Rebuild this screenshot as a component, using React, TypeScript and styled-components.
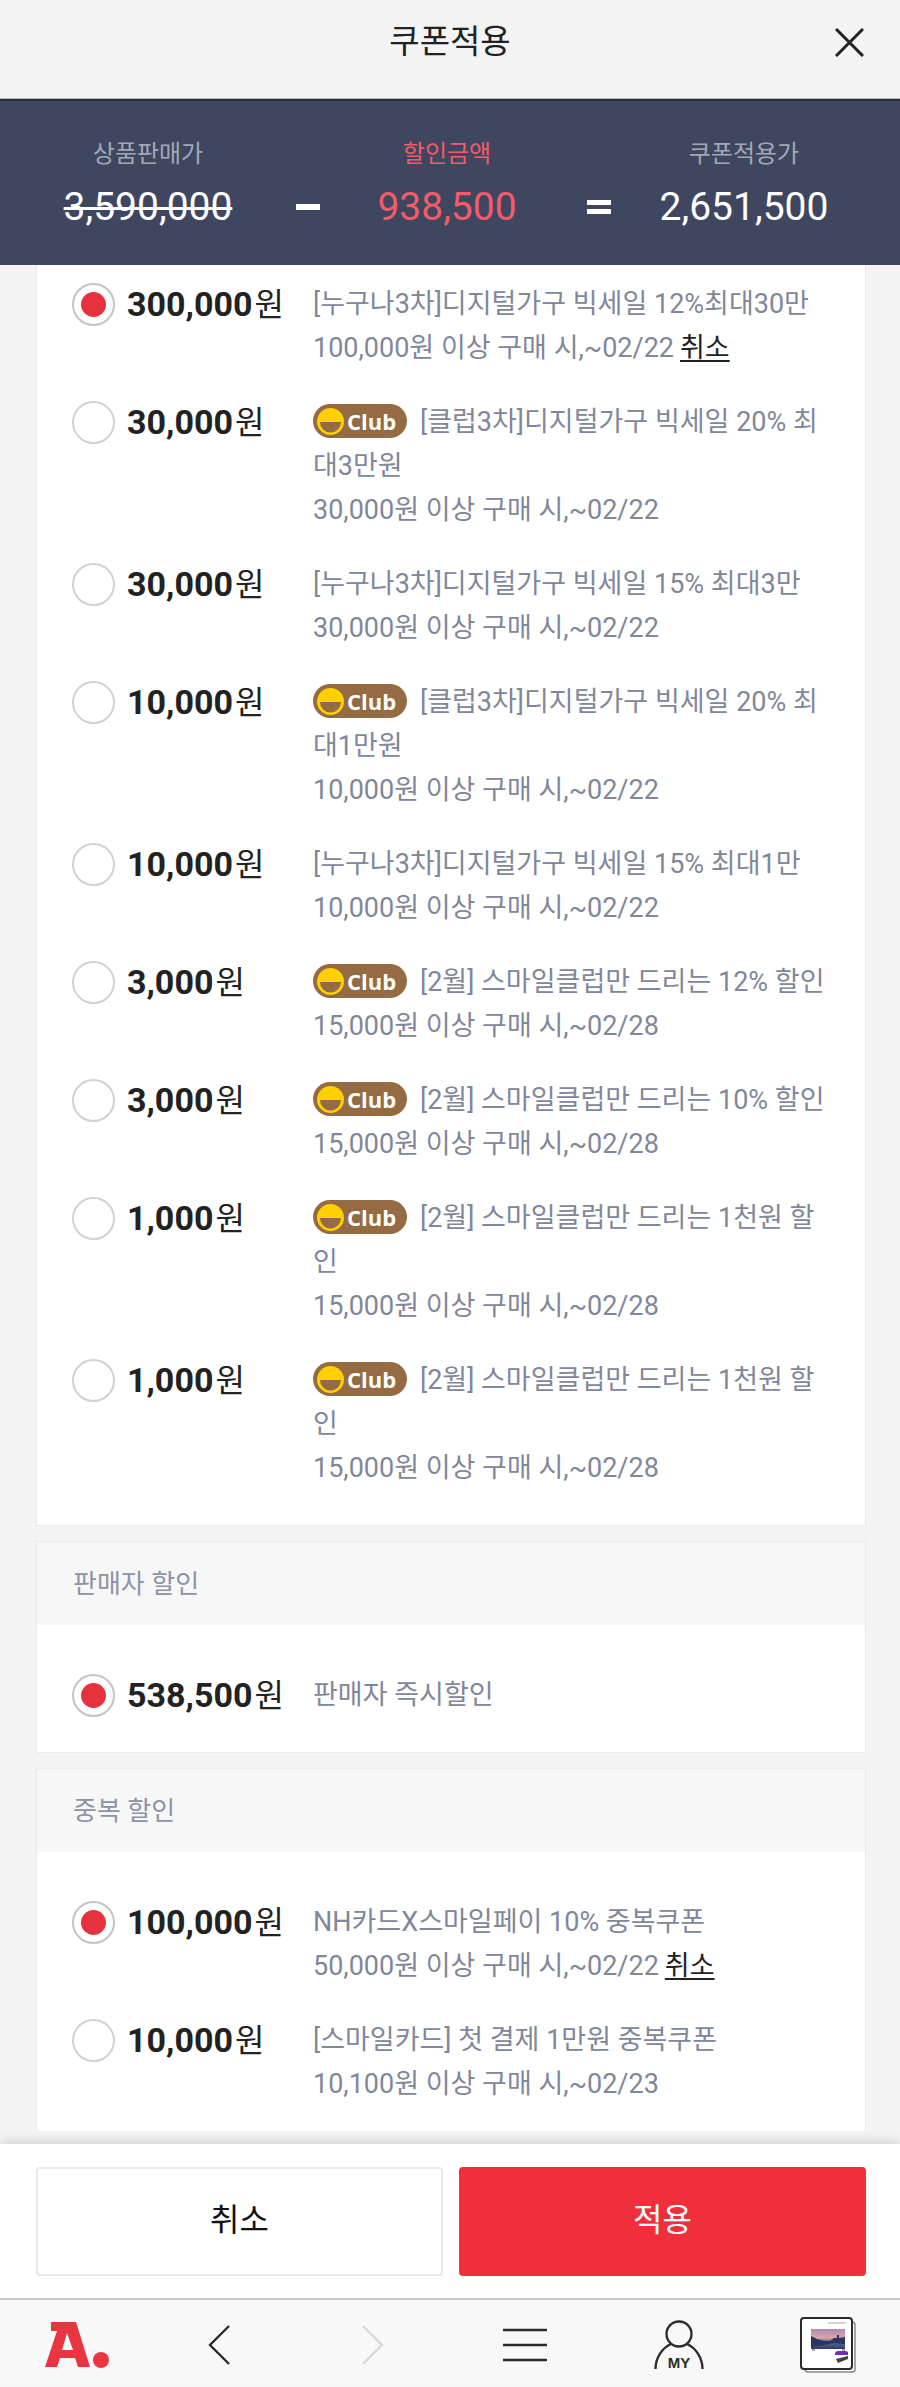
import React from "react";
import styled, { createGlobalStyle } from "styled-components";

const GlobalStyle = createGlobalStyle`
  *, *::before, *::after { box-sizing: border-box; }
  body {
    margin: 0;
    background: #f4f4f4;
    color: #222;
    font-family: Roboto, "Noto Sans CJK KR", sans-serif;
  }
  button { font-family: inherit; cursor: pointer; }
`;

const Page = styled.div`
  display: flex;
  flex-direction: column;
`;

const Header = styled.header`
  display: grid;
  grid-template-columns: 1fr auto 1fr;
  align-items: center;
  height: 99px;
  padding: 0 36px 14px;
  background: #f4f4f4;
  border-bottom: 1px solid #b4bbc0;
`;

const Title = styled.h1`
  grid-column: 2;
  margin: 0;
  font-size: 33px;
  line-height: 40px;
  font-weight: 400;
  color: #222;
`;

const CloseButton = styled.button`
  display: flex;
  justify-self: end;
  padding: 0;
  border: 0;
  background: none;
`;

const Summary = styled.section`
  display: grid;
  grid-template-columns: 296fr 24fr 254fr 50fr 240fr;
  align-items: end;
  height: 166px;
  padding: 0 36px 34px 0;
  background: #3f465f;
  border-top: 2px solid #26303c;
`;

const SummaryItem = styled.div<{ $accent?: boolean }>`
  display: flex;
  flex-direction: column;
  align-items: center;
  gap: 13px;
  color: ${(p) => (p.$accent ? "#f25b68" : "#fff")};
`;

const SummaryLabel = styled.span<{ $accent?: boolean }>`
  font-size: 24px;
  line-height: 32px;
  color: ${(p) => (p.$accent ? "#f25b68" : "#a3a8b7")};
`;

const SummaryValue = styled.span<{ $struck?: boolean }>`
  font-size: 39px;
  line-height: 48px;
  text-decoration: ${(p) => (p.$struck ? "line-through" : "none")};
  text-decoration-thickness: 3px;
`;

const Operator = styled.div`
  display: flex;
  align-items: center;
  justify-content: center;
  height: 48px;
`;

const Sections = styled.main`
  display: flex;
  flex-direction: column;
  gap: 15px;
  padding: 0 34px 13px 36px;
`;

const Card = styled.section<{ $edge?: "top" | "bottom" }>`
  background: #fff;
  border: 1px solid #e9ebed;
  ${(p) => p.$edge === "top" && "border-top: 0;"}
  ${(p) => p.$edge === "bottom" && "border-bottom: 0;"}
`;

const CardTitle = styled.h2`
  margin: 0;
  padding: 20px 36px 19px;
  background: #f7f7f7;
  font-size: 26px;
  line-height: 44px;
  font-weight: 400;
  color: #8c93a8;
`;

const CouponList = styled.ul<{ $top: number; $bottom: number }>`
  display: flex;
  flex-direction: column;
  gap: 30px;
  margin: 0;
  padding: ${(p) => p.$top}px 36px ${(p) => p.$bottom}px 35px;
  list-style: none;
`;

const CouponRow = styled.li`
  display: grid;
  grid-template-columns: 55px 186px 1fr;
  align-items: start;
`;

const Radio = styled.input`
  appearance: none;
  display: grid;
  place-items: center;
  width: 43px;
  height: 43px;
  margin: 1px 0 0;
  border: 2px solid #d2d2d2;
  border-radius: 50%;
  background: #fff;

  &:checked { border-color: #c4c4c4; }
  &:checked::before {
    content: "";
    width: 25px;
    height: 25px;
    border-radius: 50%;
    background: #e5323e;
  }
`;

const Amount = styled.label`
  font-size: 34px;
  line-height: 44px;
  font-weight: 700;
`;

const Won = styled.span`
  margin-left: 2px;
  font-size: 32px;
  font-weight: 400;
`;

const Detail = styled.div`
  font-size: 27px;
  line-height: 44px;
  color: #81879a;
`;

const Line = styled.p`
  margin: 0;
`;

const CancelLink = styled.a`
  margin-left: 6px;
  color: #222;
  text-decoration: underline;
  text-decoration-thickness: 2px;
  text-underline-offset: 3px;
`;

const ClubBadge = styled.span`
  display: inline-flex;
  align-items: center;
  gap: 3px;
  width: 94px;
  height: 34px;
  margin: 4px 13px 0 0;
  padding-left: 4px;
  border-radius: 17px;
  background: #946b43;
  color: #fff;
  font-family: "Open Sans", sans-serif;
  font-size: 22px;
  line-height: 32px;
  font-weight: 700;
  vertical-align: top;
`;

const Actions = styled.div`
  display: grid;
  grid-template-columns: 1fr 1fr;
  gap: 16px;
  padding: 23px 34px 22px 36px;
  background: #fff;
  box-shadow: 0 -2px 12px rgba(0, 0, 0, 0.16);
`;

const ActionButton = styled.button<{ $primary?: boolean }>`
  height: 109px;
  padding: 0 0 4px;
  border: 2px solid ${(p) => (p.$primary ? "#f02f3a" : "#e6eaec")};
  border-radius: 4px;
  background: ${(p) => (p.$primary ? "#f02f3a" : "#fff")};
  color: ${(p) => (p.$primary ? "#fff" : "#111")};
  font-size: 32px;
  line-height: 44px;
`;

const BottomNav = styled.nav`
  display: grid;
  grid-template-columns: 163fr 154fr 141fr 151fr 146fr 56px;
  align-items: center;
  height: 88px;
  padding: 4px 44px 0 45px;
  background: #f8f8f8;
  border-top: 2px solid #c9c9c9;
`;

const NavButton = styled.button`
  display: flex;
  justify-self: start;
  padding: 0;
  border: 0;
  background: none;
`;

const SmileIcon = () => (
  <svg width="27" height="27" viewBox="0 0 27 27" aria-hidden="true">
    <circle cx="13.500" cy="13.500" r="13.500" fill="#ffd000" />
    <path d="M3 14H24A10.500 10.500 0 0 1 3 14Z" fill="#946b43" />
  </svg>
);

type Coupon = {
  amount: string;
  title: string;
  condition?: string;
  club?: boolean;
  selected?: boolean;
  cancellable?: boolean;
};

const basicCoupons: Coupon[] = [
  { amount: "300,000", title: "[누구나3차]디지털가구 빅세일 12%최대30만", condition: "100,000원 이상 구매 시,~02/22", selected: true, cancellable: true },
  { amount: "30,000", title: "[클럽3차]디지털가구 빅세일 20% 최대3만원", condition: "30,000원 이상 구매 시,~02/22", club: true },
  { amount: "30,000", title: "[누구나3차]디지털가구 빅세일 15% 최대3만", condition: "30,000원 이상 구매 시,~02/22" },
  { amount: "10,000", title: "[클럽3차]디지털가구 빅세일 20% 최대1만원", condition: "10,000원 이상 구매 시,~02/22", club: true },
  { amount: "10,000", title: "[누구나3차]디지털가구 빅세일 15% 최대1만", condition: "10,000원 이상 구매 시,~02/22" },
  { amount: "3,000", title: "[2월] 스마일클럽만 드리는 12% 할인", condition: "15,000원 이상 구매 시,~02/28", club: true },
  { amount: "3,000", title: "[2월] 스마일클럽만 드리는 10% 할인", condition: "15,000원 이상 구매 시,~02/28", club: true },
  { amount: "1,000", title: "[2월] 스마일클럽만 드리는 1천원 할인", condition: "15,000원 이상 구매 시,~02/28", club: true },
  { amount: "1,000", title: "[2월] 스마일클럽만 드리는 1천원 할인", condition: "15,000원 이상 구매 시,~02/28", club: true },
];

const sellerCoupons: Coupon[] = [
  { amount: "538,500", title: "판매자 즉시할인", selected: true },
];

const extraCoupons: Coupon[] = [
  { amount: "100,000", title: "NH카드X스마일페이 10% 중복쿠폰", condition: "50,000원 이상 구매 시,~02/22", selected: true, cancellable: true },
  { amount: "10,000", title: "[스마일카드] 첫 결제 1만원 중복쿠폰", condition: "10,100원 이상 구매 시,~02/23" },
];

type CouponsProps = { group: string; items: Coupon[]; top: number; bottom: number };

const Coupons = ({ group, items, top, bottom }: CouponsProps) => (
  <CouponList $top={top} $bottom={bottom}>
    {items.map((coupon, i) => {
      const id = `${group}-${i}`;
      return (
        <CouponRow key={id}>
          <Radio type="radio" id={id} name={group} defaultChecked={coupon.selected} />
          <Amount htmlFor={id}>
            {coupon.amount}
            <Won>원</Won>
          </Amount>
          <Detail>
            <Line>
              {coupon.club && (
                <ClubBadge>
                  <SmileIcon />
                  Club
                </ClubBadge>
              )}
              {coupon.title}
            </Line>
            {coupon.condition && (
              <Line>
                {coupon.condition}
                {coupon.cancellable && <CancelLink href="#cancel">취소</CancelLink>}
              </Line>
            )}
          </Detail>
        </CouponRow>
      );
    })}
  </CouponList>
);

export default function App() {
  return (
    <Page>
      <GlobalStyle />
      <Header>
        <Title>쿠폰적용</Title>
        <CloseButton aria-label="닫기">
          <svg width="29" height="29" viewBox="0 0 29 29" fill="none" stroke="#222" strokeWidth="3">
            <path d="M1 1 28 28M28 1 1 28" />
          </svg>
        </CloseButton>
      </Header>

      <Summary>
        <SummaryItem>
          <SummaryLabel>상품판매가</SummaryLabel>
          <SummaryValue $struck>3,590,000</SummaryValue>
        </SummaryItem>
        <Operator>
          <svg width="24" height="24" viewBox="0 0 24 24" fill="#fff" role="img" aria-label="빼기">
            <path d="M0 9H24V15H0Z" />
          </svg>
        </Operator>
        <SummaryItem $accent>
          <SummaryLabel $accent>할인금액</SummaryLabel>
          <SummaryValue>938,500</SummaryValue>
        </SummaryItem>
        <Operator>
          <svg width="24" height="24" viewBox="0 0 24 24" fill="#fff" role="img" aria-label="등호">
            <path d="M0 5H24V10H0ZM0 14H24V19H0Z" />
          </svg>
        </Operator>
        <SummaryItem>
          <SummaryLabel>쿠폰적용가</SummaryLabel>
          <SummaryValue>2,651,500</SummaryValue>
        </SummaryItem>
      </Summary>

      <Sections>
        <Card $edge="top">
          <Coupons group="basic" items={basicCoupons} top={17} bottom={35} />
        </Card>
        <Card>
          <CardTitle>판매자 할인</CardTitle>
          <Coupons group="seller" items={sellerCoupons} top={48} bottom={34} />
        </Card>
        <Card $edge="bottom">
          <CardTitle>중복 할인</CardTitle>
          <Coupons group="extra" items={extraCoupons} top={48} bottom={25} />
        </Card>
      </Sections>

      <Actions>
        <ActionButton>취소</ActionButton>
        <ActionButton $primary>적용</ActionButton>
      </Actions>

      <BottomNav>
        <NavButton aria-label="홈">
          <svg width="64" height="46" viewBox="0 0 64 46">
            <path fill="#e8353f" fillRule="evenodd" d="M6 0H31L45 45H33L30 36H15L12 45H0L12 9H6ZM22 11 17 28H28Z" />
            <circle cx="56" cy="38" r="8" fill="#e8353f" />
          </svg>
        </NavButton>
        <NavButton aria-label="이전">
          <svg width="22" height="40" viewBox="0 0 22 40" fill="none" stroke="#2b2b2b" strokeWidth="2.400">
            <path d="M21 1 2 20 21 39" />
          </svg>
        </NavButton>
        <NavButton aria-label="다음">
          <svg width="22" height="40" viewBox="0 0 22 40" fill="none" stroke="#d8d8d8" strokeWidth="2.400">
            <path d="M1 1 20 20 1 39" />
          </svg>
        </NavButton>
        <NavButton aria-label="메뉴">
          <svg width="44" height="34" viewBox="0 0 44 34" stroke="#2b2b2b" strokeWidth="2.500">
            <path d="M0 2H44M0 17H44M0 32H44" />
          </svg>
        </NavButton>
        <NavButton aria-label="마이페이지">
          <svg width="50" height="50" viewBox="0 0 50 50" fill="none" stroke="#2b2b2b" strokeWidth="2.300">
            <circle cx="25" cy="14" r="12.500" />
            <path d="M1.500 49C1.500 38 8 28 17 24M33 24C42 28 48.500 38 48.500 49" />
            <text x="25" y="48" textAnchor="middle" fontFamily="Liberation Sans, sans-serif" fontSize="15" fontWeight="700" fill="#2b2b2b" stroke="none">
              MY
            </text>
          </svg>
        </NavButton>
        <NavButton aria-label="최근 본 상품">
          <svg width="56" height="56" viewBox="0 0 56 56">
            <defs>
              <linearGradient id="sky" x1="0" y1="0" x2="0" y2="1">
                <stop offset="0" stopColor="#a98bb8" />
                <stop offset="0.450" stopColor="#e0a5a4" />
                <stop offset="0.600" stopColor="#6b6c96" />
                <stop offset="1" stopColor="#2f3b6b" />
              </linearGradient>
            </defs>
            <rect x="5" y="5" width="50" height="50" rx="3" fill="#fff" stroke="#8a8a8a" strokeWidth="1.500" />
            <rect x="1" y="1" width="51" height="51" rx="3" fill="#fff" stroke="#2b2b2b" strokeWidth="2" />
            <path d="M28 6H46" stroke="#aaa" />
            <rect x="11" y="12" width="34" height="20" fill="url(#sky)" />
            <path d="M11 19 17 22 24 24H30L34 21H37V18H39V21L45 20V27L34 26 24 28 11 30Z" fill="#2a3562" />
            <path d="M12 33H15M42 33H45" stroke="#555" />
            <path d="M37 34H46L48 35V38H35V36Z" fill="#6a2fc0" />
            <path d="M36 42 48 39V42L38 46Z" fill="#444" />
          </svg>
        </NavButton>
      </BottomNav>
    </Page>
  );
}
